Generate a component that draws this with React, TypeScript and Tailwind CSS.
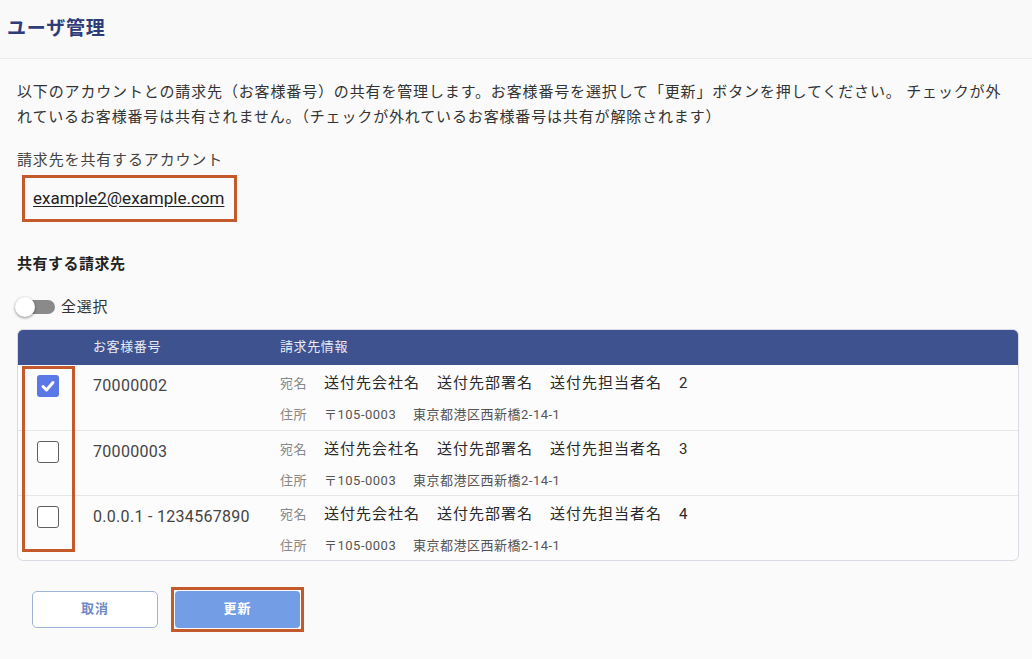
import React, { useState } from 'react';

type Billing = {
  id: string;
  number: string;
  company: string;
  dept: string;
  person: string;
  zip: string;
  address: string;
};

const rows: Billing[] = [
  { id: '2', number: '70000002', company: '送付先会社名', dept: '送付先部署名', person: '送付先担当者名', zip: '〒105-0003', address: '東京都港区西新橋2-14-1' },
  { id: '3', number: '70000003', company: '送付先会社名', dept: '送付先部署名', person: '送付先担当者名', zip: '〒105-0003', address: '東京都港区西新橋2-14-1' },
  { id: '4', number: '0.0.0.1 - 1234567890', company: '送付先会社名', dept: '送付先部署名', person: '送付先担当者名', zip: '〒105-0003', address: '東京都港区西新橋2-14-1' },
];

const font = { fontFamily: 'Roboto, "Noto Sans CJK JP", sans-serif' };

const Checkbox: React.FC<{ checked: boolean; onChange: () => void }> = ({ checked, onChange }) => (
  <button
    onClick={onChange}
    className={`w-[22px] h-[22px] rounded-[3px] flex items-center justify-center ${
      checked ? 'bg-[#5a78e6]' : 'bg-white border-[1.5px] border-[#5f5f5f]'
    }`}
  >
    {checked && (
      <svg width="16" height="16" viewBox="0 0 16 16">
        <path d="M3 8.5 L6.5 12 L13 4.5" fill="none" stroke="white" strokeWidth="3" strokeLinecap="round" strokeLinejoin="round" />
      </svg>
    )}
  </button>
);

export default function App() {
  const [selected, setSelected] = useState<string[]>(['2']);
  const [all, setAll] = useState(false);

  const toggle = (id: string) =>
    setSelected(prev => (prev.includes(id) ? prev.filter(x => x !== id) : [...prev, id]));

  return (
    <div className="w-[1032px] h-[659px] bg-[#fafafa] text-[#333]" style={font}>
      <header className="h-[59px] border-b border-[#ececec] bg-[#f9f9fa] flex items-center px-[7px]">
        <h1 className="text-[19px] font-bold text-[#2f3c78] tracking-[0.8px]">ユーザ管理</h1>
      </header>

      <div className="px-[17px] pt-[21px]">
        <p className="text-[15px] leading-[25px] text-[#333] tracking-[0.85px] pr-[4px]">
          以下のアカウントとの請求先（お客様番号）の共有を管理します。お客様番号を選択して「更新」ボタンを押してください。 チェックが外れているお客様番号は共有されません。（チェックが外れているお客様番号は共有が解除されます）
        </p>

        <div className="mt-[20px] text-[15px] text-[#444] leading-[20px] tracking-[0.85px]">請求先を共有するアカウント</div>
        <div className="mt-[5px] ml-[5px] w-[215px] h-[47px] border-[3px] border-[#c4592c] flex items-center pl-[8px]">
          <a className="text-[17px] text-[#222] underline underline-offset-2">example2@example.com</a>
        </div>

        <h2 className="mt-[32px] text-[15px] font-bold text-[#222] leading-[20px] tracking-[0.5px]">共有する請求先</h2>

        <div className="mt-[22px] flex items-center gap-[6px]">
          <button onClick={() => setAll(!all)} className="relative w-[40px] h-[20px] -ml-[2px]">
            <span className="absolute left-[6px] right-0 top-[3px] h-[14px] rounded-full bg-[#8a8a8a]" />
            <span className={`absolute top-0 w-[20px] h-[20px] rounded-full bg-white shadow-[0_1px_3px_rgba(0,0,0,0.45)] ${all ? 'left-[20px]' : 'left-0'}`} />
          </button>
          <span className="text-[15px] text-[#333] tracking-[0.8px]">全選択</span>
        </div>

        <div className="relative mt-[10px] w-[1002px] rounded-[6px] border border-[#d8dbe3] bg-[#fcfcfc] overflow-hidden">
          <div className="h-[35px] bg-[#3d528e] flex items-center text-[13px] text-[#e8ebf5] tracking-[0.6px]">
            <div className="w-[75px]" />
            <div className="w-[187px]">お客様番号</div>
            <div>請求先情報</div>
          </div>
          {rows.map((r, i) => (
            <div key={r.id} className={`h-[65px] flex ${i > 0 ? 'border-t border-[#e6e6e6]' : ''}`}>
              <div className="w-[75px] pl-[19px] pt-[10px]">
                <Checkbox checked={selected.includes(r.id)} onChange={() => toggle(r.id)} />
              </div>
              <div className="w-[187px] pt-[10px] text-[16px] text-[#444] leading-[22px] tracking-[0.3px]">{r.number}</div>
              <div className="flex-1 pt-[8px]">
                <div className="flex items-center h-[22px]">
                  <span className="w-[44px] text-[13px] text-[#888] tracking-[0.5px]">宛名</span>
                  <span className="text-[15px] text-[#2a2a2a] flex gap-[17px] tracking-[1px]">
                    <span>{r.company}</span>
                    <span>{r.dept}</span>
                    <span>{r.person}</span>
                    <span>{r.id}</span>
                  </span>
                </div>
                <div className="flex items-center h-[22px] mt-[9px] text-[13px] tracking-[0.5px]">
                  <span className="w-[44px] text-[#888]">住所</span>
                  <span className="text-[#555] w-[89px]">{r.zip}</span>
                  <span className="text-[#555]">{r.address}</span>
                </div>
              </div>
            </div>
          ))}
          <div className="absolute left-[4px] top-[36px] w-[53px] h-[186px] border-[3px] border-[#c4592c] pointer-events-none" />
        </div>

        <div className="mt-[26px] ml-[15px] flex items-center gap-[13px]">
          <button className="w-[126px] h-[37px] rounded-[5px] border border-[#9fb2d9] bg-white text-[13px] font-bold text-[#7089c4] tracking-[1px]">
            取消
          </button>
          <div className="border-[3px] border-[#c4592c] p-[1px]">
            <button className="w-[125px] h-[37px] rounded-[4px] bg-[#739ee6] text-[13px] font-bold text-white tracking-[1px]">
              更新
            </button>
          </div>
        </div>
      </div>
    </div>
  );
}
